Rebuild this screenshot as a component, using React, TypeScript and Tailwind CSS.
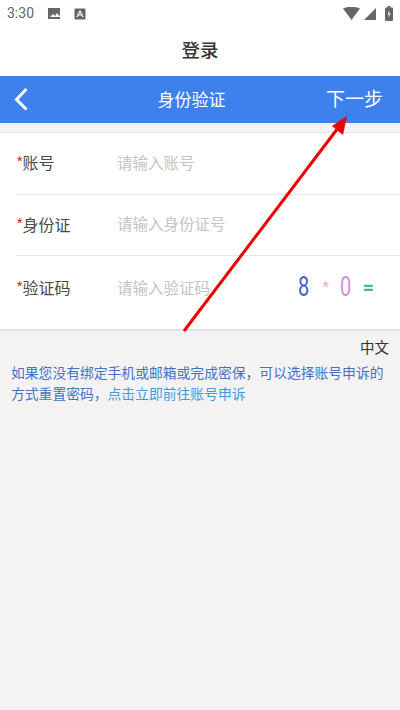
const rows = [
  { label: '账号', hint: '请输入账号' },
  { label: '身份证', hint: '请输入身份证号' },
]

function Label({ text }: { text: string }) {
  return (
    <div className="flex w-[101px] shrink-0 items-center text-[16px] leading-[22px] text-[#4a4a4a]">
      <span className="text-[#e53935]">*</span>
      <span className="-ml-[1px]">{text}</span>
    </div>
  )
}

function StatusBar() {
  return (
    <div className="flex h-[27px] items-center justify-between pl-[7px] pr-[7px] text-[#666]">
      <div className="flex items-center">
        <span className="text-[14px] font-['Roboto',sans-serif]">3:30</span>
        <svg className="ml-[14px]" width="14" height="13" viewBox="0 0 14 13">
          <path d="M0 1h12v11H0z" fill="#666" />
          <path d="M2 10l3-3 2 2 2-3 3 4z" fill="#fff" />
          <circle cx="12.500" cy="9" r="1.200" fill="#fff" />
        </svg>
        <svg className="ml-[12px]" width="12" height="12" viewBox="0 0 12 12">
          <rect width="11" height="11" x="0.500" y="0.500" rx="1" fill="#666" />
          <path d="M3 9l3-6 3 6M4.200 7h3.600" stroke="#fff" strokeWidth="1.200" fill="none" />
        </svg>
      </div>
      <div className="flex items-center gap-[4px]">
        <svg width="17" height="13" viewBox="0 0 17 13">
          <path d="M0 1.500Q8.500-2 17 1.500L8.500 13z" fill="#666" />
        </svg>
        <svg width="12" height="12" viewBox="0 0 12 12">
          <path d="M12 0v12H0z" fill="#666" />
        </svg>
        <svg className="ml-[5px]" width="8" height="15" viewBox="0 0 8 15">
          <path d="M2.500 0h3v1.500H7a1 1 0 0 1 1 1V14a1 1 0 0 1-1 1H1a1 1 0 0 1-1-1V2.500a1 1 0 0 1 1-1h1.500z" fill="#666" />
          <path d="M4.500 4L2.500 8.500h1.500L3.500 12l2-4.500H4z" fill="#fff" />
        </svg>
      </div>
    </div>
  )
}

export default function App() {
  return (
    <div className="relative flex h-[710px] w-[400px] flex-col overflow-hidden bg-[#f4f2f3] font-['Noto_Sans_CJK_SC',sans-serif]">
      <div className="bg-white">
        <StatusBar />
        <div className="flex h-[49px] items-center justify-center pb-[3px] text-[18.500px] font-medium text-[#333]">登录</div>
      </div>

      <div className="flex h-[47px] items-center justify-between bg-[#3d80ee] pb-[2px] pl-[14px] pr-[17px] text-white">
        <svg width="14" height="24" viewBox="0 0 14 24" fill="none" stroke="#fff" strokeWidth="3">
          <path d="M12.500 2L2.500 12.500L12.500 22.500" />
        </svg>
        <span className="ml-[29px] text-[17px]">身份验证</span>
        <span className="text-[19px]">下一步</span>
      </div>

      <div className="h-[10px] border-b border-[#f0e6ee]" />

      <div className="bg-white pl-[16px] shadow-[0_1px_2px_rgba(0,0,0,0.12)]">
        {rows.map((row) => (
          <div key={row.label} className="flex h-[61.500px] items-center border-b border-[#e5e5e5] pb-[2px]">
            <Label text={row.label} />
            <span className="text-[15.500px] text-[#c4c4c4]">{row.hint}</span>
          </div>
        ))}
        <div className="flex h-[73px] items-start pt-[20px]">
          <Label text="验证码" />
          <span className="text-[15.500px] leading-[22px] text-[#c4c4c4]">请输入验证码</span>
          <div className="ml-auto mr-[26px] flex w-[76px] items-center font-['Roboto',sans-serif] text-[20px] leading-[22px]">
            <span className="inline-block w-[25px] origin-center scale-y-[1.35] text-[#3f5fd8]">8</span>
            <span className="w-[18px] text-[15px] text-[#f2a6c4]">*</span>
            <span className="inline-block w-[23px] origin-center scale-y-[1.35] text-[#cf8fd8]">0</span>
            <span className="font-bold text-[#3fb89a]">=</span>
          </div>
        </div>
      </div>

      <div className="px-[11px] pt-[8px]">
        <div className="text-right text-[14.500px] leading-[20px] text-[#333]">中文</div>
        <div className="mt-[5px] text-[13.800px] leading-[21px]">
          <div className="whitespace-nowrap text-[#3f74c8]">如果您没有绑定手机或邮箱或完成密保，可以选择账号申诉的</div>
          <div className="flex whitespace-nowrap">
            <span className="text-[#3f74c8]">方式重置密码，</span>
            <span className="text-[#3f9be0]">点击立即前往账号申诉</span>
          </div>
        </div>
      </div>

      <svg className="absolute left-0 top-0" width="400" height="710" viewBox="0 0 400 710">
        <path d="M184 331L338 128" stroke="#ec0000" strokeWidth="3" fill="none" />
        <path d="M347 116L332 126L343 135z" fill="#ec0000" />
      </svg>
    </div>
  )
}
